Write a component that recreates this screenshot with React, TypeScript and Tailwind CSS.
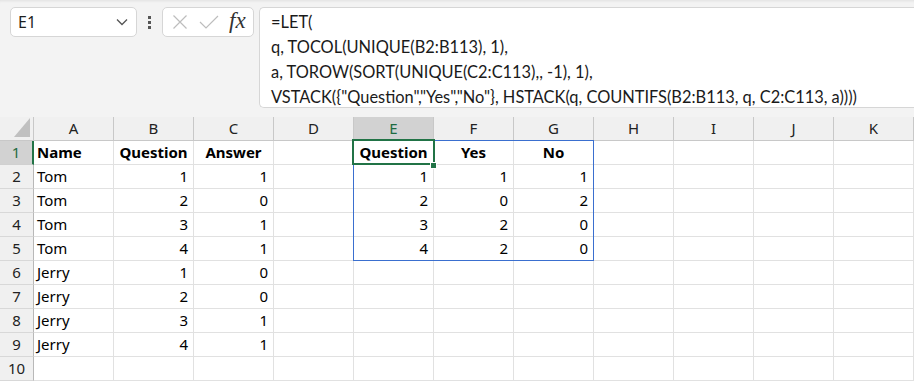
import React from "react";

const cols = ["A", "B", "C", "D", "E", "F", "G", "H", "I", "J", "K"];

type Cell = { v: string; align?: "l" | "r" | "c"; bold?: boolean };

const data: Record<number, Record<string, Cell>> = {
  1: {
    A: { v: "Name", bold: true },
    B: { v: "Question", bold: true, align: "c" },
    C: { v: "Answer", bold: true, align: "c" },
    E: { v: "Question", bold: true, align: "c" },
    F: { v: "Yes", bold: true, align: "c" },
    G: { v: "No", bold: true, align: "c" },
  },
};
const rowsAB: [string, string, string][] = [
  ["Tom", "1", "1"],
  ["Tom", "2", "0"],
  ["Tom", "3", "1"],
  ["Tom", "4", "1"],
  ["Jerry", "1", "0"],
  ["Jerry", "2", "0"],
  ["Jerry", "3", "1"],
  ["Jerry", "4", "1"],
];
rowsAB.forEach((r, i) => {
  data[i + 2] = {
    A: { v: r[0] },
    B: { v: r[1], align: "r" },
    C: { v: r[2], align: "r" },
  };
});
const efg: [string, string, string][] = [
  ["1", "1", "1"],
  ["2", "0", "2"],
  ["3", "2", "0"],
  ["4", "2", "0"],
];
efg.forEach((r, i) => {
  data[i + 2].E = { v: r[0], align: "r" };
  data[i + 2].F = { v: r[1], align: "r" };
  data[i + 2].G = { v: r[2], align: "r" };
});

const formula = [
  "=LET(",
  "q, TOCOL(UNIQUE(B2:B113), 1),",
  "a, TOROW(SORT(UNIQUE(C2:C113),, -1), 1),",
  'VSTACK({"Question","Yes","No"}, HSTACK(q, COUNTIFS(B2:B113, q, C2:C113, a))))',
];

export default function App() {
  return (
    <div className="w-[914px] h-[381px] overflow-hidden bg-white text-[#1a1a1a] font-['Noto_Sans',sans-serif]">
      {/* Top formula area */}
      <div className="h-[117px] bg-[#f3f3f3] flex items-start gap-0 pt-[7px] shadow-[inset_0_3px_3px_-2px_rgba(0,0,0,0.08)]">
        {/* Name box */}
        <div className="ml-[10px] w-[127px] h-[30px] bg-white border border-[#d6d6d6] rounded-[5px] flex items-center justify-between pl-[7px] pr-[8px]">
          <span className="text-[16px] leading-none text-[#1f1f1f]">E1</span>
          <svg width="12" height="8" viewBox="0 0 12 8">
            <path d="M1 1.5 L6 6.5 L11 1.5" fill="none" stroke="#555" strokeWidth="1.3" />
          </svg>
        </div>
        {/* vertical ellipsis */}
        <div className="w-[25px] h-[30px] flex flex-col items-center justify-center gap-[2px]">
          <div className="w-[3px] h-[3px] bg-[#555]" />
          <div className="w-[3px] h-[3px] bg-[#555]" />
          <div className="w-[3px] h-[3px] bg-[#555]" />
        </div>
        {/* buttons */}
        <div className="w-[92px] h-[30px] bg-white border border-[#d6d6d6] rounded-[5px] flex items-center pl-[8px]">
          <svg width="16" height="16" viewBox="0 0 16 16" className="ml-[1px]">
            <path d="M1.5 1.5 L14.5 14.5 M14.5 1.5 L1.5 14.5" stroke="#bdbdbd" strokeWidth="1.2" fill="none" />
          </svg>
          <svg width="20" height="16" viewBox="0 0 20 16" className="ml-[11px]">
            <path d="M1 8 L7 14 L19 2" stroke="#bdbdbd" strokeWidth="1.2" fill="none" />
          </svg>
          <span className="ml-[10px] text-[23px] leading-none italic font-['Liberation_Serif',serif] text-[#333] -mt-[4px]">fx</span>
        </div>
        {/* formula text */}
        <div className="ml-[5px] flex-1 h-[101px] bg-white border border-[#d6d6d6] rounded-l-[5px] border-r-0 pl-[11px] pt-[2px] font-['Lato',sans-serif] text-[16.4px] leading-[24.5px] text-[#1a1a1a] whitespace-pre">
          {formula.map((l, i) => (
            <div key={i} className="h-[25px] leading-[24px]">{l}</div>
          ))}
        </div>
      </div>

      {/* Grid */}
      <div className="relative">
        {/* header row */}
        <div className="flex h-[24px]">
          <div className="w-[34px] h-[24px] bg-[#f0f0f0] border-r border-b border-[#c8c8c8] flex items-end justify-end pr-[3px] pb-[3px]">
            <svg width="16" height="19" viewBox="0 0 16 19">
              <path d="M16 0 L16 19 L0 19 Z" fill="#c0c0c0" />
            </svg>
          </div>
          {cols.map((c) => (
            <div
              key={c}
              className={
                c === "E"
                  ? "w-[80px] h-[24px] bg-[#d2d2d2] border-r border-b border-[#c8c8c8] flex items-center justify-center text-[15px] text-[#1e6b41]"
                  : "w-[80px] h-[24px] bg-[#f0f0f0] border-r border-b border-[#c8c8c8] flex items-center justify-center text-[15px] text-[#222]"
              }
            >
              {c}
            </div>
          ))}
        </div>
        {Array.from({ length: 10 }, (_, i) => i + 1).map((r) => (
          <div key={r} className="flex h-[24px]">
            <div
              className={
                r === 1
                  ? "w-[34px] h-[24px] bg-[#d2d2d2] border-r-2 border-r-[#217346] border-b border-b-[#d0d0d0] flex items-center justify-center text-[15px] text-[#1e6b41]"
                  : "w-[34px] h-[24px] bg-[#f0f0f0] border-r border-r-[#b8b8b8] border-b border-b-[#d8d8d8] flex items-center justify-center text-[15px] text-[#222]"
              }
            >
              {r}
            </div>
            {cols.map((c) => {
              const cell = data[r]?.[c];
              const align =
                cell?.align === "r"
                  ? "justify-end pr-[5px]"
                  : cell?.align === "c"
                  ? "justify-center"
                  : "justify-start pl-[3px]";
              return (
                <div
                  key={c}
                  className={`w-[80px] h-[24px] border-r border-b border-[#e1e1e1] flex items-center ${align} text-[15px] text-black ${cell?.bold ? "font-bold" : ""}`}
                >
                  {cell?.v}
                </div>
              );
            })}
          </div>
        ))}

        {/* Spill range border */}
        <div className="absolute left-[353px] top-[23px] w-[241px] h-[121px] border border-[#3a6fcf] pointer-events-none" />
        {/* Active cell */}
        <div className="absolute left-[352px] top-[22px] w-[83px] h-[26px] border-2 border-[#217346] pointer-events-none" />
        <div className="absolute left-[430px] top-[45px] w-[7px] h-[7px] bg-[#217346] border border-white pointer-events-none" />
      </div>
    </div>
  );
}
